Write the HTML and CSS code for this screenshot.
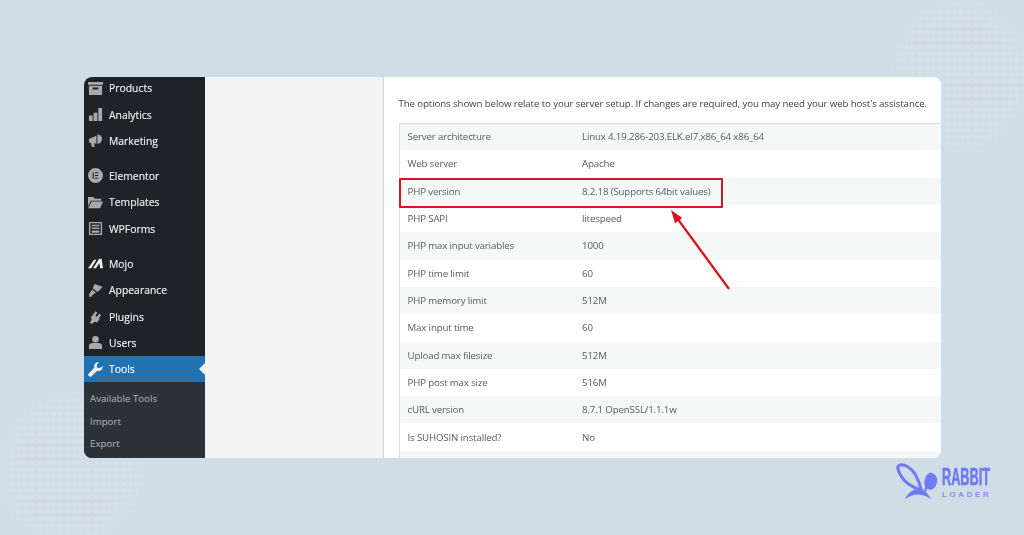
FILE: index.html
```html
<!DOCTYPE html>
<html lang="en">
<head>
<meta charset="utf-8">
<title>Site Health Info</title>
<link rel="stylesheet" href="styles.css">
</head>
<body>
<div class="page">
  <div class="dots dots-tr"></div>
  <div class="dots dots-bl"></div>
  <div class="card">
    <aside class="sidebar">
      <nav class="menu">
        <div class="group">
          <div class="item"><svg class="ico" viewBox="0 0 16 16"><path d="M0 1h16v3H0zM1 5h14v10H1zM5 7v2h6V7z" fill-rule="evenodd"/></svg><span>Products</span></div>
          <div class="item"><svg class="ico" viewBox="0 0 16 16"><path d="M1 9h4v6H1zM6 6h4v9H6zM11 1h4v14h-4z"/></svg><span>Analytics</span></div>
          <div class="item"><svg class="ico" viewBox="0 0 16 16"><path d="M1 6.500L9 3v8.500L6.500 10.800 7 15H4L3.200 10.300 1 10zM10 1.500a5 5 0 0 1 0 10z"/></svg><span>Marketing</span></div>
        </div>
        <div class="group">
          <div class="item"><svg class="ico" viewBox="0 0 16 16"><path fill-rule="evenodd" d="M8 0a8 8 0 1 1 0 16A8 8 0 0 1 8 0zM5 4.500v7h1.200v-7zM7.500 4.500v1.200H11V4.500zM7.500 7.400v1.200H11V7.400zM7.500 10.300v1.200H11v-1.200z"/></svg><span>Elementor</span></div>
          <div class="item"><svg class="ico" viewBox="0 0 16 16"><path d="M0 2h6l1 2h7v2H3L0 12zM4 7h12l-3 7H0z"/></svg><span>Templates</span></div>
          <div class="item"><svg class="ico" viewBox="0 0 16 16"><path fill-rule="evenodd" d="M1 1h14v14H1zM2.500 2.500v11h11v-11zM4 4h8v1.500H4zM4 7h8v1.500H4zM4 10h8v2.500H4z"/></svg><span>WPForms</span></div>
        </div>
        <div class="group">
          <div class="item"><svg class="ico ico-white" viewBox="0 0 16 16"><path d="M0 13L6.500 4H9L3.500 13zM5.500 13L12 3h2.500L16 13h-3l-.9-5.500L8.500 13z"/></svg><span>Mojo</span></div>
          <div class="item"><svg class="ico" viewBox="0 0 16 16"><path d="M7 1l8.500 3-3.500 4-2 1.500-5-4zM4.500 7l4 3.500-3 1.500-2 3-2.500-.5.5-3z"/></svg><span>Appearance</span></div>
          <div class="item"><svg class="ico" viewBox="0 0 16 16"><path d="M8 2.500l2 1.500-2 3L9.500 8.200 12 5l2 1.500-2.500 3.500 1 1-3 3.500-2.500-1-3 2.500-2-1.500 2-3-1-2.500z"/></svg><span>Plugins</span></div>
          <div class="item"><svg class="ico" viewBox="0 0 16 16"><path d="M8 1a3.500 3.500 0 1 1 0 7 3.500 3.500 0 0 1 0-7zM1 15v-3.500C1 9.500 3 8.500 5 8.500h6c2 0 4 1 4 3V15z"/></svg><span>Users</span></div>
          <div class="item item-current"><svg class="ico" viewBox="0 0 16 16"><path d="M15.500 4.200a4.300 4.300 0 0 1-5.700 5L4 15a2 2 0 0 1-3-3l5.800-5.800a4.300 4.300 0 0 1 5-5.700L9.300 3l.4 3 3 .4z"/></svg><span>Tools</span></div>
        </div>
      </nav>
      <ul class="submenu">
        <li>Available Tools</li>
        <li>Import</li>
        <li>Export</li>
      </ul>
    </aside>
    <div class="gutter"></div>
    <main class="main">
      <p class="intro">The options shown below relate to your server setup. If changes are required, you may need your web host's assistance.</p>
      <table class="info">
        <tbody>
          <tr><td>Server architecture</td><td>Linux 4.19.286-203.ELK.el7.x86_64 x86_64</td></tr>
          <tr><td>Web server</td><td>Apache</td></tr>
          <tr><td>PHP version</td><td>8.2.18 (Supports 64bit values)</td></tr>
          <tr><td>PHP SAPI</td><td>litespeed</td></tr>
          <tr><td>PHP max input variables</td><td>1000</td></tr>
          <tr><td>PHP time limit</td><td>60</td></tr>
          <tr><td>PHP memory limit</td><td>512M</td></tr>
          <tr><td>Max input time</td><td>60</td></tr>
          <tr><td>Upload max filesize</td><td>512M</td></tr>
          <tr><td>PHP post max size</td><td>516M</td></tr>
          <tr><td>cURL version</td><td>8.7.1 OpenSSL/1.1.1w</td></tr>
          <tr><td>Is SUHOSIN installed?</td><td>No</td></tr>
          <tr><td>&nbsp;</td><td>&nbsp;</td></tr>
        </tbody>
      </table>
      <div class="highlight"></div>
      <svg class="arrow" viewBox="0 0 70 90"><path d="M65 84L13 13" stroke="#d8141f" stroke-width="2.200" fill="none"/><path d="M7 5L18.300 12.900 11 18.200z" fill="#d8141f"/></svg>
    </main>
  </div>
  <div class="logo">
    <svg class="logo-mark" viewBox="0 0 42 38"><path d="M3 2.500C8 0 15 5 19 11c3 5 5 10 6.500 16.500C17 24.500 8 19 4.500 12 2 7 .5 4 3 2.500z" fill="none" stroke="#6f7bf0" stroke-width="3" stroke-linejoin="round"/><path d="M9 36C12 30 17 26 22 26c5 0 10 4 13 10-4-2.500-9-4.500-13-4.500S13 33.500 9 36z" fill="#6f7bf0"/><path d="M28 30l3-7" stroke="#6f7bf0" stroke-width="2.400"/><path d="M36 10c4 1.500 6 5 5 9.500s-4 8-8 7c-3.500-1-5-4-4.500-8 .5-5 3.500-9.500 7.500-8.500z" fill="#6f7bf0"/></svg>
    <div class="logo-text">
      <span class="logo-rabbit">RABBIT</span>
      <span class="logo-loader">LOADER</span>
    </div>
  </div>
</div>
</body>
</html>
```
FILE: styles.css
```css
* { box-sizing: border-box; }
html, body { margin: 0; height: 100%; }
body {
  background: #d0dce6;
  font-family: "Open Sans", "Liberation Sans", sans-serif;
  overflow: hidden;
}
.page {
  position: relative;
  width: 1024px;
  height: 535px;
  padding: 77px 83px 0 84px;
  overflow: hidden;
}
.dots {
  position: absolute;
  pointer-events: none;
  background-image: radial-gradient(circle, rgba(255,255,255,.13) 1.8px, transparent 3px);
  background-size: 7px 7px;
}
.dots-tr {
  top: -20px;
  right: -20px;
  width: 170px;
  height: 190px;
  -webkit-mask-image: radial-gradient(closest-side, #000 55%, transparent);
  mask-image: radial-gradient(closest-side, #000 55%, transparent);
}
.dots-bl {
  bottom: -30px;
  left: -20px;
  width: 180px;
  height: 190px;
  -webkit-mask-image: radial-gradient(closest-side, #000 55%, transparent);
  mask-image: radial-gradient(closest-side, #000 55%, transparent);
}
.card {
  position: relative;
  display: flex;
  width: 857px;
  height: 381px;
  border-radius: 8px;
  overflow: hidden;
  background: #fff;
  filter: blur(.35px);
}
.sidebar {
  display: flex;
  flex-direction: column;
  flex: none;
  width: 120.5px;
  background: #1d2327;
  color: #f0f0f1;
  font-size: 10.4px;
  -webkit-text-stroke: .15px currentColor;
}
.menu {
  display: flex;
  flex-direction: column;
  gap: 8.6px;
  margin-top: -2px;
}
.group {
  display: flex;
  flex-direction: column;
}
.item {
  position: relative;
  display: flex;
  align-items: center;
  gap: 6.500px;
  height: 26.4px;
  padding-left: 3.500px;
}
.ico {
  flex: none;
  width: 15px;
  height: 15px;
  fill: #a7aaad;
}
.ico-white { fill: #f0f0f1; }
.item-current {
  background: #2271b1;
  color: #fff;
}
.item-current .ico { fill: #f0f0f1; }
.item-current::after {
  content: "";
  position: absolute;
  right: 0;
  top: 50%;
  margin-top: -6px;
  border: 6px solid transparent;
  border-left-width: 0;
  border-right-color: #f0f0f1;
}
.submenu {
  flex: 1;
  margin: 0;
  padding: 5px 0 0 6px;
  list-style: none;
  background: #2c3338;
  color: #a5aaae;
  font-size: 9.7px;
  -webkit-text-stroke: .1px currentColor;
}
.submenu li {
  display: flex;
  align-items: center;
  height: 22.5px;
}
.gutter {
  flex: none;
  width: 179.5px;
  background: #f3f3f4;
  border-right: 1px solid #d6d6d8;
}
.main {
  position: relative;
  flex: 1;
  min-width: 0;
  padding-left: 14.500px;
  background: #fff;
  color: #50575e;
}
.intro {
  margin: 0;
  padding-top: 19px;
  height: 45.500px;
  font-size: 9.7px;
  letter-spacing: -.105px;
  line-height: 16px;
  color: #3c434a;
  white-space: nowrap;
}
.info {
  width: 600px;
  border-collapse: collapse;
  table-layout: fixed;
  border-top: 1px solid #dcdcde;
  border-left: 1px solid #dcdcde;
  font-size: 9.7px;
  letter-spacing: -.15px;
  color: #555c63;
}
.info td {
  height: 27.32px;
  padding: 0 8px;
  white-space: nowrap;
}
.info td:first-child { width: 175px; }
.info tr:nth-child(odd) { background: #f6f7f7; }
.highlight {
  position: absolute;
  left: 15px;
  top: 100.500px;
  width: 324px;
  height: 30px;
  border: 2.500px solid #d8141f;
  border-radius: 1px;
}
.arrow {
  position: absolute;
  left: 280px;
  top: 128px;
  width: 70px;
  height: 90px;
}
.logo {
  display: flex;
  align-items: flex-start;
  gap: 4px;
  margin: 5px 0 0 812px;
  width: 100px;
  filter: blur(.3px);
}
.logo-mark {
  flex: none;
  width: 42px;
  height: 38px;
}
.logo-text {
  display: flex;
  flex-direction: column;
  flex: none;
  width: 50px;
  margin-top: 7px;
  font-family: "Liberation Sans", sans-serif;
  font-weight: 700;
  white-space: nowrap;
}
.logo-rabbit {
  height: 17px;
  font-size: 12.7px;
  line-height: 17px;
  color: #6f7bf0;
  transform: scaleY(1.85);
  -webkit-text-stroke: .35px currentColor;
}
.logo-loader {
  margin-top: 4px;
  font-size: 8px;
  line-height: 8px;
  letter-spacing: 2.6px;
  color: #8490e4;
}
```
